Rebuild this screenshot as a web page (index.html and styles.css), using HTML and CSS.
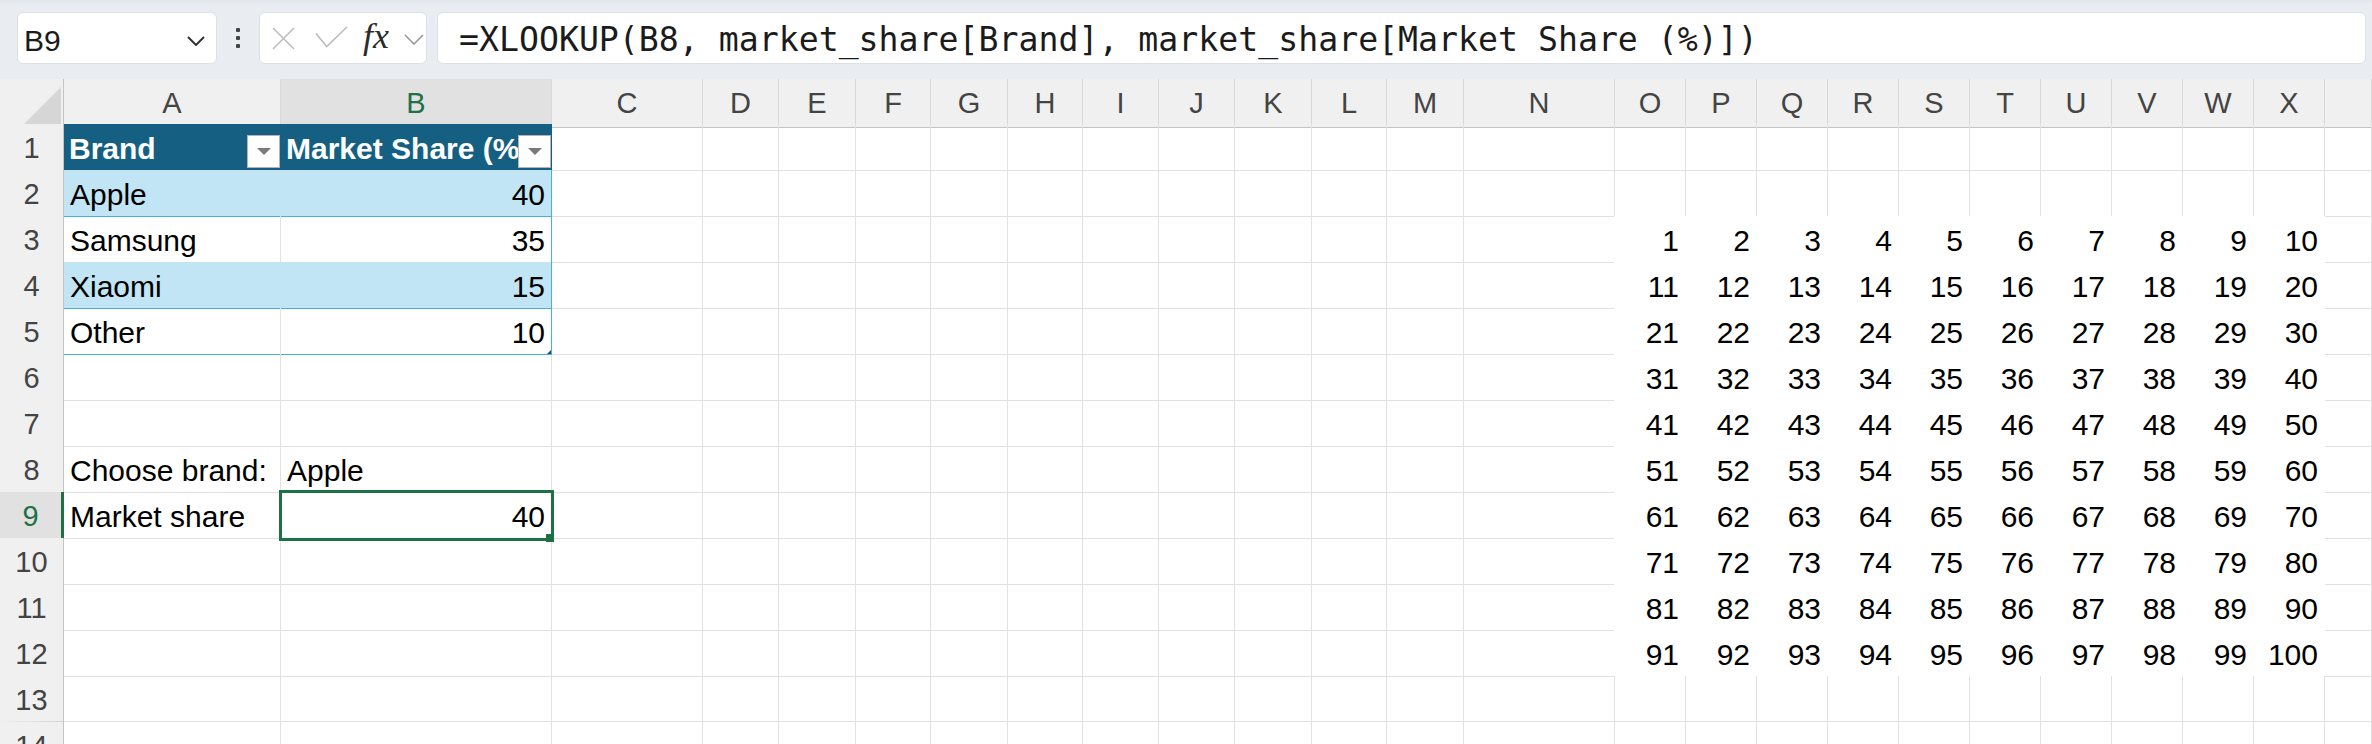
FILE: index.html
```html
<!DOCTYPE html>
<html lang="en">
<head>
<meta charset="utf-8">
<title>Sheet</title>
<link rel="stylesheet" href="styles.css">
</head>
<body>
<div class="toolbar">
  <div class="namebox"><span>B9</span><svg class="nb-chev" width="18" height="10" viewBox="0 0 18 10"><path d="M1 1L9 9L17 1" fill="none" stroke="#333" stroke-width="2"/></svg></div>
  <div class="dots"><i></i><i></i><i></i></div>
  <div class="fxbox">
    <svg class="ic-x" width="23" height="23" viewBox="0 0 23 23"><path d="M1 1L22 22M22 1L1 22" fill="none" stroke="#bdbdbd" stroke-width="1.6"/></svg>
    <svg class="ic-ok" width="33" height="22" viewBox="0 0 33 22"><path d="M1 7.5L11.7 20.5L32 1" fill="none" stroke="#bdbdbd" stroke-width="1.6"/></svg>
    <span class="fx">fx</span>
    <svg class="ic-chev" width="20" height="11" viewBox="0 0 20 11"><path d="M1 1L10 10L19 1" fill="none" stroke="#999" stroke-width="1.6"/></svg>
  </div>
  <div class="formula">=XLOOKUP(B8, market_share[Brand], market_share[Market Share (%)])</div>
</div>

<div class="sheet">
  <div class="row head">
    <div class="c corner"><svg width="38" height="38" viewBox="0 0 38 38"><path d="M38 0V38H0Z" fill="#d6d6d6"/></svg></div>
    <div class="c ch">A</div><div class="c ch sel">B</div><div class="c ch">C</div><div class="c ch">D</div><div class="c ch">E</div><div class="c ch">F</div><div class="c ch">G</div><div class="c ch">H</div><div class="c ch">I</div><div class="c ch">J</div><div class="c ch">K</div><div class="c ch">L</div><div class="c ch">M</div><div class="c ch">N</div><div class="c ch">O</div><div class="c ch">P</div><div class="c ch">Q</div><div class="c ch">R</div><div class="c ch">S</div><div class="c ch">T</div><div class="c ch">U</div><div class="c ch">V</div><div class="c ch">W</div><div class="c ch">X</div><div class="c ch"></div>
  </div>

  <div class="row">
    <div class="c rh">1</div>
    <div class="c th"><span class="lbl">Brand</span><i class="flt"><svg width="14" height="7" viewBox="0 0 14 7"><path d="M0 0H14L7 7Z" fill="#7a7a7a"/></svg></i></div>
    <div class="c th"><span class="lbl">Market Share (%)</span><i class="flt"><svg width="14" height="7" viewBox="0 0 14 7"><path d="M0 0H14L7 7Z" fill="#7a7a7a"/></svg></i></div>
    <div class="c"></div><div class="c"></div><div class="c"></div><div class="c"></div><div class="c"></div><div class="c"></div><div class="c"></div><div class="c"></div><div class="c"></div><div class="c"></div><div class="c"></div><div class="c"></div>
    <div class="c"></div><div class="c"></div><div class="c"></div><div class="c"></div><div class="c"></div><div class="c"></div><div class="c"></div><div class="c"></div><div class="c"></div><div class="c"></div>
    <div class="c"></div>
  </div>

  <div class="row">
    <div class="c rh">2</div>
    <div class="c t1 ta">Apple</div><div class="c t1 tb n">40</div>
    <div class="c"></div><div class="c"></div><div class="c"></div><div class="c"></div><div class="c"></div><div class="c"></div><div class="c"></div><div class="c"></div><div class="c"></div><div class="c"></div><div class="c"></div><div class="c"></div>
    <div class="c wb"></div><div class="c wb"></div><div class="c wb"></div><div class="c wb"></div><div class="c wb"></div><div class="c wb"></div><div class="c wb"></div><div class="c wb"></div><div class="c wb"></div><div class="c wb"></div>
    <div class="c"></div>
  </div>

  <div class="row">
    <div class="c rh">3</div>
    <div class="c t0">Samsung</div><div class="c t0 tb n">35</div>
    <div class="c"></div><div class="c"></div><div class="c"></div><div class="c"></div><div class="c"></div><div class="c"></div><div class="c"></div><div class="c"></div><div class="c"></div><div class="c"></div><div class="c"></div><div class="c wr"></div>
    <div class="c w n">1</div><div class="c w n">2</div><div class="c w n">3</div><div class="c w n">4</div><div class="c w n">5</div><div class="c w n">6</div><div class="c w n">7</div><div class="c w n">8</div><div class="c w n">9</div><div class="c w n">10</div>
    <div class="c"></div>
  </div>

  <div class="row">
    <div class="c rh">4</div>
    <div class="c t1 ta">Xiaomi</div><div class="c t1 tb n">15</div>
    <div class="c"></div><div class="c"></div><div class="c"></div><div class="c"></div><div class="c"></div><div class="c"></div><div class="c"></div><div class="c"></div><div class="c"></div><div class="c"></div><div class="c"></div><div class="c wr"></div>
    <div class="c w n">11</div><div class="c w n">12</div><div class="c w n">13</div><div class="c w n">14</div><div class="c w n">15</div><div class="c w n">16</div><div class="c w n">17</div><div class="c w n">18</div><div class="c w n">19</div><div class="c w n">20</div>
    <div class="c"></div>
  </div>

  <div class="row">
    <div class="c rh">5</div>
    <div class="c t0">Other</div><div class="c t0 tb n rel">10<i class="rsz"></i></div>
    <div class="c"></div><div class="c"></div><div class="c"></div><div class="c"></div><div class="c"></div><div class="c"></div><div class="c"></div><div class="c"></div><div class="c"></div><div class="c"></div><div class="c"></div><div class="c wr"></div>
    <div class="c w n">21</div><div class="c w n">22</div><div class="c w n">23</div><div class="c w n">24</div><div class="c w n">25</div><div class="c w n">26</div><div class="c w n">27</div><div class="c w n">28</div><div class="c w n">29</div><div class="c w n">30</div>
    <div class="c"></div>
  </div>

  <div class="row">
    <div class="c rh">6</div>
    <div class="c"></div><div class="c"></div>
    <div class="c"></div><div class="c"></div><div class="c"></div><div class="c"></div><div class="c"></div><div class="c"></div><div class="c"></div><div class="c"></div><div class="c"></div><div class="c"></div><div class="c"></div><div class="c wr"></div>
    <div class="c w n">31</div><div class="c w n">32</div><div class="c w n">33</div><div class="c w n">34</div><div class="c w n">35</div><div class="c w n">36</div><div class="c w n">37</div><div class="c w n">38</div><div class="c w n">39</div><div class="c w n">40</div>
    <div class="c"></div>
  </div>

  <div class="row">
    <div class="c rh">7</div>
    <div class="c"></div><div class="c"></div>
    <div class="c"></div><div class="c"></div><div class="c"></div><div class="c"></div><div class="c"></div><div class="c"></div><div class="c"></div><div class="c"></div><div class="c"></div><div class="c"></div><div class="c"></div><div class="c wr"></div>
    <div class="c w n">41</div><div class="c w n">42</div><div class="c w n">43</div><div class="c w n">44</div><div class="c w n">45</div><div class="c w n">46</div><div class="c w n">47</div><div class="c w n">48</div><div class="c w n">49</div><div class="c w n">50</div>
    <div class="c"></div>
  </div>

  <div class="row">
    <div class="c rh">8</div>
    <div class="c">Choose brand:</div><div class="c">Apple</div>
    <div class="c"></div><div class="c"></div><div class="c"></div><div class="c"></div><div class="c"></div><div class="c"></div><div class="c"></div><div class="c"></div><div class="c"></div><div class="c"></div><div class="c"></div><div class="c wr"></div>
    <div class="c w n">51</div><div class="c w n">52</div><div class="c w n">53</div><div class="c w n">54</div><div class="c w n">55</div><div class="c w n">56</div><div class="c w n">57</div><div class="c w n">58</div><div class="c w n">59</div><div class="c w n">60</div>
    <div class="c"></div>
  </div>

  <div class="row">
    <div class="c rh sel">9</div>
    <div class="c">Market share</div><div class="c n cur">40<i class="box"></i><i class="hdl"></i></div>
    <div class="c"></div><div class="c"></div><div class="c"></div><div class="c"></div><div class="c"></div><div class="c"></div><div class="c"></div><div class="c"></div><div class="c"></div><div class="c"></div><div class="c"></div><div class="c wr"></div>
    <div class="c w n">61</div><div class="c w n">62</div><div class="c w n">63</div><div class="c w n">64</div><div class="c w n">65</div><div class="c w n">66</div><div class="c w n">67</div><div class="c w n">68</div><div class="c w n">69</div><div class="c w n">70</div>
    <div class="c"></div>
  </div>

  <div class="row">
    <div class="c rh">10</div>
    <div class="c"></div><div class="c"></div>
    <div class="c"></div><div class="c"></div><div class="c"></div><div class="c"></div><div class="c"></div><div class="c"></div><div class="c"></div><div class="c"></div><div class="c"></div><div class="c"></div><div class="c"></div><div class="c wr"></div>
    <div class="c w n">71</div><div class="c w n">72</div><div class="c w n">73</div><div class="c w n">74</div><div class="c w n">75</div><div class="c w n">76</div><div class="c w n">77</div><div class="c w n">78</div><div class="c w n">79</div><div class="c w n">80</div>
    <div class="c"></div>
  </div>

  <div class="row">
    <div class="c rh">11</div>
    <div class="c"></div><div class="c"></div>
    <div class="c"></div><div class="c"></div><div class="c"></div><div class="c"></div><div class="c"></div><div class="c"></div><div class="c"></div><div class="c"></div><div class="c"></div><div class="c"></div><div class="c"></div><div class="c wr"></div>
    <div class="c w n">81</div><div class="c w n">82</div><div class="c w n">83</div><div class="c w n">84</div><div class="c w n">85</div><div class="c w n">86</div><div class="c w n">87</div><div class="c w n">88</div><div class="c w n">89</div><div class="c w n">90</div>
    <div class="c"></div>
  </div>

  <div class="row">
    <div class="c rh">12</div>
    <div class="c"></div><div class="c"></div>
    <div class="c"></div><div class="c"></div><div class="c"></div><div class="c"></div><div class="c"></div><div class="c"></div><div class="c"></div><div class="c"></div><div class="c"></div><div class="c"></div><div class="c"></div><div class="c wr"></div>
    <div class="c w n">91</div><div class="c w n">92</div><div class="c w n">93</div><div class="c w n">94</div><div class="c w n">95</div><div class="c w n">96</div><div class="c w n">97</div><div class="c w n">98</div><div class="c w n">99</div><div class="c w n">100</div>
    <div class="c"></div>
  </div>

  <div class="row">
    <div class="c rh">13</div>
    <div class="c"></div><div class="c"></div>
    <div class="c"></div><div class="c"></div><div class="c"></div><div class="c"></div><div class="c"></div><div class="c"></div><div class="c"></div><div class="c"></div><div class="c"></div><div class="c"></div><div class="c"></div><div class="c"></div>
    <div class="c"></div><div class="c"></div><div class="c"></div><div class="c"></div><div class="c"></div><div class="c"></div><div class="c"></div><div class="c"></div><div class="c"></div><div class="c"></div>
    <div class="c"></div>
  </div>

  <div class="row">
    <div class="c rh">14</div>
    <div class="c"></div><div class="c"></div>
    <div class="c"></div><div class="c"></div><div class="c"></div><div class="c"></div><div class="c"></div><div class="c"></div><div class="c"></div><div class="c"></div><div class="c"></div><div class="c"></div><div class="c"></div><div class="c"></div>
    <div class="c"></div><div class="c"></div><div class="c"></div><div class="c"></div><div class="c"></div><div class="c"></div><div class="c"></div><div class="c"></div><div class="c"></div><div class="c"></div>
    <div class="c"></div>
  </div>
</div>
</body>
</html>
```

FILE: styles.css
```css
* { box-sizing: border-box; margin: 0; padding: 0; }

html, body {
  width: 2372px;
  height: 744px;
  overflow: hidden;
  background: #fff;
}

body {
  font-family: "Liberation Sans", Arial, sans-serif;
  color: #000;
}

/* ---------- formula bar ---------- */
.toolbar {
  height: 79px;
  background: linear-gradient(#e2e6eb, #e9ecf0 4px) #e9ecf0;
  display: flex;
  align-items: flex-start;
  padding: 12px 6px 0 17px;
}

.namebox {
  width: 200px;
  height: 52px;
  flex: none;
  background: #fff;
  border: 1px solid #dde0e4;
  border-radius: 6px;
  display: flex;
  align-items: center;
  justify-content: space-between;
  padding: 6px 11px 0 6px;
  font-size: 30px;
  color: #1b1b1b;
}

.dots {
  flex: none;
  display: flex;
  flex-direction: column;
  gap: 4px;
  margin: 16px 19px 0;
}

.dots i {
  display: block;
  width: 4px;
  height: 4px;
  border-radius: 1px;
  background: #444;
}

.fxbox {
  width: 168px;
  height: 52px;
  flex: none;
  background: #fff;
  border: 1px solid #dde0e4;
  border-radius: 6px;
  display: flex;
  align-items: center;
  padding-left: 12px;
}

.ic-ok { margin-left: 20px; margin-bottom: 3px; }

.fx {
  width: 30px;
  margin-left: 15px;
  font-family: "Liberation Serif", "Times New Roman", serif;
  font-style: italic;
  font-size: 36px;
  line-height: 1;
  color: #2b2b2b;
  margin-bottom: 4px;
}

.ic-chev { margin-left: 11px; margin-top: 2px; }

.formula {
  flex: 1;
  height: 52px;
  margin-left: 10px;
  background: #fff;
  border: 1px solid #dde0e4;
  border-radius: 6px;
  padding: 4px 0 0 21px;
  font-family: "DejaVu Sans Mono", "Liberation Mono", monospace;
  font-size: 33.2px;
  line-height: 46px;
  white-space: nowrap;
  overflow: hidden;
  color: #1b1b1b;
}

/* ---------- grid ---------- */
.sheet { width: 2372px; }

.row {
  display: grid;
  grid-template-columns: 64px 217px 271px 151px 76px 77px 75px 77px 75px 76px 76px 77px 75px 77px 151px repeat(10, 71px) 1fr;
  height: 46px;
}

.row.head { height: 45px; }

.c {
  border-right: 1px solid #e1e1e1;
  border-bottom: 1px solid #e1e1e1;
  padding: 3px 6px 0;
  font-size: 30px;
  line-height: 43px;
  white-space: nowrap;
  min-width: 0;
}

.n { text-align: right; }

/* headers */
.corner {
  background: #f0f0f0;
  border-right-color: #c4c4c4;
  border-bottom-color: #c4c4c4;
  display: flex;
  align-items: flex-end;
  justify-content: flex-end;
  padding: 0 2px 2px 0;
}

.ch {
  background: #f0f0f0;
  border-right-color: #d9d9d9;
  border-bottom-color: #c4c4c4;
  padding: 3px 0 0;
  text-align: center;
  font-size: 29px;
  color: #444;
}

.ch.sel {
  background: #e1e1e1;
  color: #1e7145;
  border-bottom: 3px solid #1e7145;
}

.rh {
  border-right-color: #c4c4c4;
  border-bottom: 0;
  background: linear-gradient(to right, #f0f0f0, #d2d2d2) left bottom / 100% 1px no-repeat, #f0f0f0;
  padding: 3px 0 0;
  text-align: center;
  font-size: 29px;
  color: #444;
}

.rh.sel {
  background: linear-gradient(to right, #e1e1e1, #cfcfcf) left bottom / 100% 1px no-repeat, #e1e1e1;
  border-right: 3px solid #1e7145;
  color: #1e7145;
}

/* table */
.th {
  background: #156082;
  color: #fff;
  font-weight: bold;
  border-right-color: transparent;
  border-bottom-color: #46b1e1;
  display: flex;
  align-items: flex-start;
  padding: 3px 0 0 5px;
}

.th .lbl {
  flex: 1;
  min-width: 0;
  overflow: hidden;
}

.flt {
  flex: none;
  width: 33px;
  height: 33px;
  margin-top: 8px;
  background: #fff;
  border: 1px solid #b4b4b4;
  display: flex;
  align-items: center;
  justify-content: center;
}

.t1 {
  background: #c1e5f5;
  border-bottom-color: #46b1e1;
}

.t1.ta { border-right-color: #c1e5f5; }

.t0 { border-bottom-color: #46b1e1; }

.tb { border-right-color: #46b1e1; }

.rel { position: relative; }

.rsz {
  position: absolute;
  right: 0;
  bottom: 0;
  width: 0;
  height: 0;
  border-left: 4px solid transparent;
  border-bottom: 4px solid #1f4e79;
}

/* white filled block */
.w { border-color: #fff; }
.wb { border-bottom-color: #fff; }
.wr { border-right-color: #fff; }

/* active cell */
.cur { position: relative; }

.cur .box {
  position: absolute;
  top: -2px;
  left: -2px;
  right: -3px;
  bottom: -3px;
  border: 3px solid #1e7145;
  z-index: 2;
}

.cur .hdl {
  position: absolute;
  right: -3px;
  bottom: -4px;
  width: 8px;
  height: 8px;
  background: #1e7145;
  z-index: 3;
}
```
